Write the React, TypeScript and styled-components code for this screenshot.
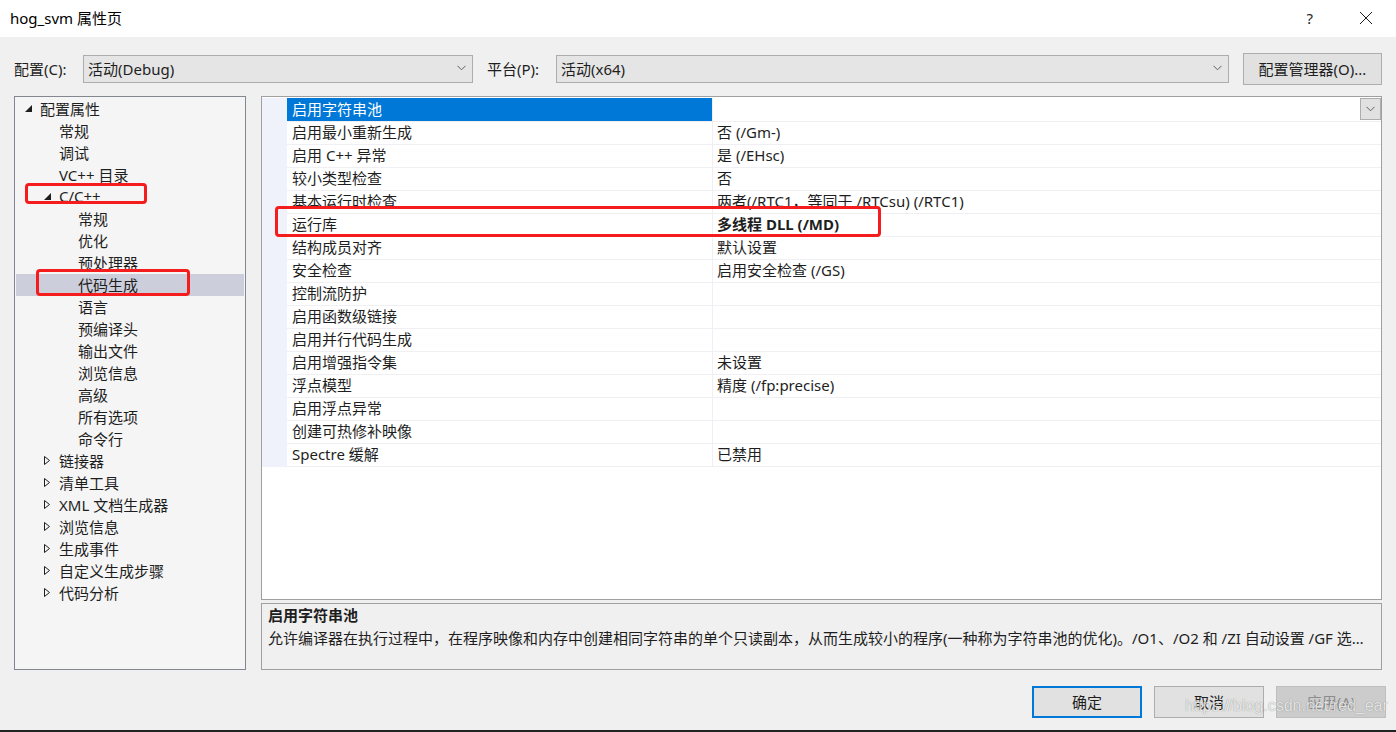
import React from 'react';
import styled, { createGlobalStyle } from 'styled-components';

const FONT = '"Segoe UI", "Noto Sans", "Noto Sans CJK SC", sans-serif';

const GlobalStyle = createGlobalStyle`
  html, body {
    margin: 0;
    padding: 0;
    background: #f0f0f0;
  }
  body {
    font-family: ${FONT};
    font-size: 15px;
    color: #1e1e1e;
  }
  * { box-sizing: border-box; }
`;

type TreeItem = {
  label: string;
  level: number;
  arrow?: 'open' | 'closed';
  selected?: boolean;
};

const treeItems: TreeItem[] = [
  { label: '配置属性', level: 0, arrow: 'open' },
  { label: '常规', level: 1 },
  { label: '调试', level: 1 },
  { label: 'VC++ 目录', level: 1 },
  { label: 'C/C++', level: 1, arrow: 'open' },
  { label: '常规', level: 2 },
  { label: '优化', level: 2 },
  { label: '预处理器', level: 2 },
  { label: '代码生成', level: 2, selected: true },
  { label: '语言', level: 2 },
  { label: '预编译头', level: 2 },
  { label: '输出文件', level: 2 },
  { label: '浏览信息', level: 2 },
  { label: '高级', level: 2 },
  { label: '所有选项', level: 2 },
  { label: '命令行', level: 2 },
  { label: '链接器', level: 1, arrow: 'closed' },
  { label: '清单工具', level: 1, arrow: 'closed' },
  { label: 'XML 文档生成器', level: 1, arrow: 'closed' },
  { label: '浏览信息', level: 1, arrow: 'closed' },
  { label: '生成事件', level: 1, arrow: 'closed' },
  { label: '自定义生成步骤', level: 1, arrow: 'closed' },
  { label: '代码分析', level: 1, arrow: 'closed' },
];

type Prop = { name: string; value: string; bold?: boolean };

const props: Prop[] = [
  { name: '启用字符串池', value: '' },
  { name: '启用最小重新生成', value: '否 (/Gm-)' },
  { name: '启用 C++ 异常', value: '是 (/EHsc)' },
  { name: '较小类型检查', value: '否' },
  { name: '基本运行时检查', value: '两者(/RTC1，等同于 /RTCsu) (/RTC1)' },
  { name: '运行库', value: '多线程 DLL (/MD)', bold: true },
  { name: '结构成员对齐', value: '默认设置' },
  { name: '安全检查', value: '启用安全检查 (/GS)' },
  { name: '控制流防护', value: '' },
  { name: '启用函数级链接', value: '' },
  { name: '启用并行代码生成', value: '' },
  { name: '启用增强指令集', value: '未设置' },
  { name: '浮点模型', value: '精度 (/fp:precise)' },
  { name: '启用浮点异常', value: '' },
  { name: '创建可热修补映像', value: '' },
  { name: 'Spectre 缓解', value: '已禁用' },
];

const Chevron = () => (
  <svg width='9' height='6' viewBox='0 0 9 6'>
    <path d='M0.5 0.8 L4.5 4.8 L8.5 0.8' fill='none' stroke='#606060' strokeWidth='1' />
  </svg>
);

const OpenArrow = () => (
  <svg width='9' height='9' viewBox='0 0 9 9'>
    <path d='M8 1 L8 8 L1 8 Z' fill='#1e1e1e' />
  </svg>
);

const ClosedArrow = () => (
  <svg width='8' height='11' viewBox='0 0 8 11'>
    <path d='M1.5 1.5 L6.5 5.5 L1.5 9.5 Z' fill='none' stroke='#1e1e1e' strokeWidth='1' />
  </svg>
);

const App: React.FunctionComponent = () => {
  return (
    <>
      <GlobalStyle />
      <Window>
        <TitleBar>
          <span>hog_svm 属性页</span>
          <TitleControls>
            <HelpMark>?</HelpMark>
            <svg width='14' height='14' viewBox='0 0 14 14'>
              <path d='M1 1 L13 13 M13 1 L1 13' stroke='#1e1e1e' strokeWidth='1' />
            </svg>
          </TitleControls>
        </TitleBar>

        <Body>
          <ConfigRow>
            <FieldLabel $width={69}>配置(C):</FieldLabel>
            <Combo $width={390}>
              <span>活动(Debug)</span>
              <Chevron />
            </Combo>
            <FieldLabel $width={69} $gap={14}>平台(P):</FieldLabel>
            <Combo $width={673}>
              <span>活动(x64)</span>
              <Chevron />
            </Combo>
            <ManagerButton>配置管理器(O)...</ManagerButton>
          </ConfigRow>

          <Main>
            <Tree>
              {treeItems.map((item, i) => (
                <TreeRow key={i} $level={item.level} $selected={item.selected}>
                  <ArrowBox>
                    {item.arrow === 'open' && <OpenArrow />}
                    {item.arrow === 'closed' && <ClosedArrow />}
                  </ArrowBox>
                  <span>{item.label}</span>
                </TreeRow>
              ))}
            </Tree>

            <RightColumn>
              <Grid>
                {props.map((p, i) => (
                  <GridRow key={i}>
                    <Gutter />
                    <NameCell $selected={i === 0}>{p.name}</NameCell>
                    <ValueCell $bold={p.bold}>
                      {p.value}
                      {i === 0 && (
                        <DropButton>
                          <Chevron />
                        </DropButton>
                      )}
                    </ValueCell>
                  </GridRow>
                ))}
              </Grid>
              <Description>
                <DescTitle>启用字符串池</DescTitle>
                <DescText>
                  允许编译器在执行过程中，在程序映像和内存中创建相同字符串的单个只读副本，从而生成较小的程序(一种称为字符串池的优化)。/O1、/O2 和 /ZI 自动设置 /GF 选项。
                </DescText>
              </Description>
            </RightColumn>
          </Main>

          <Footer>
            <DialogButton $variant='default'>确定</DialogButton>
            <DialogButton>取消</DialogButton>
            <DialogButton $variant='disabled'>应用(A)</DialogButton>
          </Footer>
        </Body>

        <BottomEdge />

        <RedMark $x={25} $y={183} $w={122} $h={21} />
        <RedMark $x={36} $y={269} $w={154} $h={27} />
        <RedMark $x={275} $y={206} $w={606} $h={31} />
        <Watermark>https://blog.csdn.net/red_ear</Watermark>
      </Window>
    </>
  );
};

export default App;

const Window = styled.div`
  position: relative;
  width: 1396px;
  height: 732px;
  display: flex;
  flex-direction: column;
  background: #f0f0f0;
  overflow: hidden;
`;

const TitleBar = styled.div`
  height: 37px;
  flex: none;
  background: #ffffff;
  display: flex;
  align-items: center;
  justify-content: space-between;
  padding: 0 23px 2px 10px;
  font-size: 15px;
  color: #000;
`;

const TitleControls = styled.div`
  display: flex;
  align-items: center;
  gap: 46px;
`;

const HelpMark = styled.span`
  font-size: 15px;
  color: #1e1e1e;
`;

const Body = styled.div`
  flex: 1;
  display: flex;
  flex-direction: column;
  padding: 16px 10px 0 14px;
`;

const ConfigRow = styled.div`
  height: 32px;
  display: flex;
  align-items: center;
`;

const FieldLabel = styled.span<{ $width: number; $gap?: number }>`
  width: ${(p) => p.$width}px;
  margin-left: ${(p) => p.$gap ?? 0}px;
  flex: none;
  white-space: nowrap;
  padding-bottom: 2px;
`;

const Combo = styled.div<{ $width: number }>`
  width: ${(p) => p.$width}px;
  height: 28px;
  flex: none;
  display: flex;
  align-items: center;
  justify-content: space-between;
  padding: 0 6px 2px 4px;
  background: #e5e5e5;
  border: 1px solid #adadad;
`;

const ManagerButton = styled.button`
  margin-left: 14px;
  width: 139px;
  height: 32px;
  flex: none;
  font-family: ${FONT};
  font-size: 15px;
  color: #1e1e1e;
  background: #e1e1e1;
  border: 1px solid #adadad;
  padding: 0 0 2px;
`;

const Main = styled.div`
  margin-top: 11px;
  height: 574px;
  display: flex;
  gap: 15px;
  padding-right: 4px;
`;

const Tree = styled.div`
  width: 232px;
  flex: none;
  background: #f5f5f5;
  border: 1px solid #828790;
  padding: 1px 0 0;
`;

const TreeRow = styled.div<{ $level: number; $selected?: boolean }>`
  height: 22px;
  margin: 0 1px;
  display: flex;
  align-items: center;
  padding-left: ${(p) => 8 + p.$level * 19}px;
  padding-bottom: 2px;
  background: ${(p) => (p.$selected ? '#cccedb' : 'transparent')};
  white-space: nowrap;
`;

const ArrowBox = styled.span`
  width: 16px;
  flex: none;
  display: flex;
  align-items: center;
`;

const RightColumn = styled.div`
  flex: 1;
  min-width: 0;
  display: flex;
  flex-direction: column;
  gap: 3px;
`;

const Grid = styled.div`
  height: 504px;
  flex: none;
  background: #ffffff;
  border: 1px solid #a0a0a0;
  padding-top: 1px;
`;

const GridRow = styled.div`
  height: 23px;
  display: grid;
  grid-template-columns: 25px 426px 1fr;
`;

const Gutter = styled.div`
  background: #eff2fa;
`;

const NameCell = styled.div<{ $selected?: boolean }>`
  display: flex;
  align-items: center;
  padding: 0 0 2px 5px;
  border-bottom: 1px solid #f0f0f4;
  border-right: 1px solid #f0f0f4;
  background: ${(p) => (p.$selected ? '#0078d7' : 'transparent')};
  color: ${(p) => (p.$selected ? '#ffffff' : '#1e1e1e')};
  white-space: nowrap;
`;

const ValueCell = styled.div<{ $bold?: boolean }>`
  position: relative;
  display: flex;
  align-items: center;
  padding: 0 0 2px 4px;
  border-bottom: 1px solid #f0f0f4;
  font-weight: ${(p) => (p.$bold ? 700 : 400)};
  white-space: nowrap;
`;

const DropButton = styled.div`
  position: absolute;
  right: 0;
  top: 0;
  width: 21px;
  height: 22px;
  display: flex;
  align-items: center;
  justify-content: center;
  background: #e1e1e1;
  border: 1px solid #adadad;
`;

const Description = styled.div`
  flex: 1;
  min-width: 0;
  border: 1px solid #a0a0a0;
  padding: 0 10px 0 6px;
  background: #f0f0f0;
`;

const DescTitle = styled.div`
  font-weight: 700;
  height: 22px;
  line-height: 22px;
`;

const DescText = styled.div`
  height: 24px;
  line-height: 24px;
  white-space: nowrap;
  overflow: hidden;
  text-overflow: ellipsis;
`;

const Footer = styled.div`
  margin-top: 16px;
  display: flex;
  justify-content: flex-end;
  gap: 12px;
`;

const DialogButton = styled.button<{ $variant?: 'default' | 'disabled' }>`
  width: 110px;
  height: 32px;
  padding: 0 0 2px;
  font-family: ${FONT};
  font-size: 15px;
  background: ${(p) => (p.$variant === 'disabled' ? '#cccccc' : '#e1e1e1')};
  color: ${(p) => (p.$variant === 'disabled' ? '#8d8d8d' : '#1e1e1e')};
  border: ${(p) =>
    p.$variant === 'default'
      ? '2px solid #0078d7'
      : p.$variant === 'disabled'
      ? '1px solid #bfbfbf'
      : '1px solid #adadad'};
`;

const BottomEdge = styled.div`
  height: 2px;
  flex: none;
  background: #222222;
`;

const RedMark = styled.div<{ $x: number; $y: number; $w: number; $h: number }>`
  position: absolute;
  left: ${(p) => p.$x}px;
  top: ${(p) => p.$y}px;
  width: ${(p) => p.$w}px;
  height: ${(p) => p.$h}px;
  border: 3px solid #f41c1c;
  border-radius: 4px;
  pointer-events: none;
`;

const Watermark = styled.div`
  position: absolute;
  left: 1185px;
  top: 697px;
  font-family: "Liberation Sans", Arial, sans-serif;
  font-size: 16px;
  color: rgba(255, 255, 255, 0.8);
  text-shadow: 0 0 1px rgba(0, 0, 0, 0.45);
  pointer-events: none;
  white-space: nowrap;
`;
